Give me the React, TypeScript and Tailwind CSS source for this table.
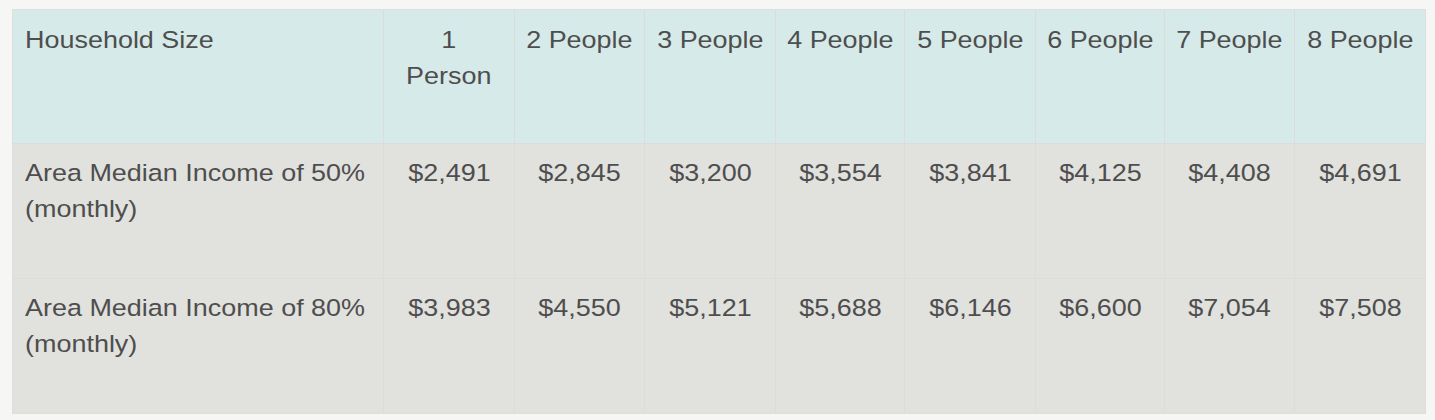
import React from "react";

const cols = ["1\nPerson", "2 People", "3 People", "4 People", "5 People", "6 People", "7 People", "8 People"];
const rows = [
  { label: "Area Median Income of 50% (monthly)", values: ["$2,491", "$2,845", "$3,200", "$3,554", "$3,841", "$4,125", "$4,408", "$4,691"] },
  { label: "Area Median Income of 80% (monthly)", values: ["$3,983", "$4,550", "$5,121", "$5,688", "$6,146", "$6,600", "$7,054", "$7,508"] },
];

export default function App() {
  return (
    <div className="w-[1435px] h-[420px] bg-[#f6f6f5] pl-[12px] pt-[9px] font-['Liberation_Sans',Arial,sans-serif]">
      <div className="w-[1414px] border border-[#dedede] bg-[#dcdcda]">
        <div className="grid grid-cols-[370px_130px_129px_130px_128px_130px_128px_129px_130px] gap-px text-[24.5px] leading-[36px] text-[#4e4e4e]">
          <div className="bg-[#d6eae9] h-[133px] pl-[12px] pt-[12px]">
            <span className="inline-block scale-x-[1.1] origin-left">Household Size</span>
          </div>
          {cols.map((c) => (
            <div key={c} className="bg-[#d6eae9] h-[133px] px-[4px] pt-[12px] text-center whitespace-pre-line">
              <span className="inline-block scale-x-[1.1] origin-center">{c}</span>
            </div>
          ))}
          {rows.map((r) => (
            <React.Fragment key={r.label}>
              <div className="bg-[#e1e1de] h-[134px] pl-[12px] pr-[4px] pt-[11px]">
                <span className="inline-block scale-x-[1.1] origin-left">{r.label}</span>
              </div>
              {r.values.map((v) => (
                <div key={v} className="bg-[#e1e1de] h-[134px] px-[4px] pt-[11px] text-center">
                  <span className="inline-block scale-x-[1.1] origin-center">{v}</span>
                </div>
              ))}
            </React.Fragment>
          ))}
        </div>
      </div>
    </div>
  );
}
